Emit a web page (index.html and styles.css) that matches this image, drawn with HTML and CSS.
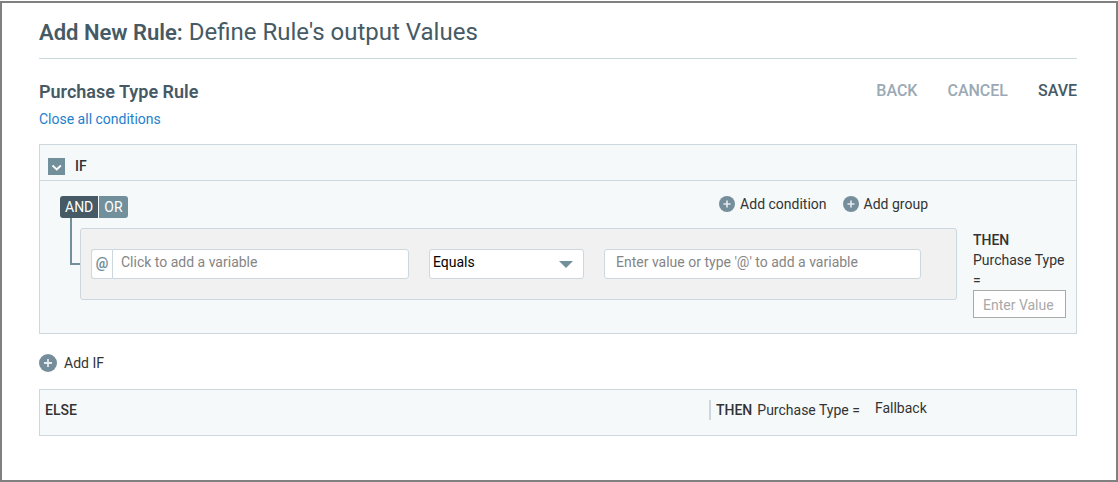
FILE: index.html
```html
<!DOCTYPE html>
<html lang="en">
<head>
<meta charset="utf-8">
<title>Add New Rule</title>
<link rel="stylesheet" href="styles.css">
</head>
<body>
<svg class="defs" aria-hidden="true">
  <symbol id="plus" viewBox="0 0 18 18">
    <circle cx="9" cy="9" r="9" fill="#768e9c"/>
    <path d="M9 5v8M5 9h8" stroke="#e4ecf0" stroke-width="1.8" fill="none"/>
  </symbol>
</svg>
<main class="page">
  <h1 class="page-title"><strong>Add New Rule:</strong> Define Rule's output Values</h1>
  <header class="rule-head">
    <div class="rule-info">
      <h2 class="rule-name">Purchase Type Rule</h2>
      <a class="link" href="#">Close all conditions</a>
    </div>
    <div class="actions">
      <button class="action" type="button">BACK</button>
      <button class="action" type="button">CANCEL</button>
      <button class="action action-main" type="button">SAVE</button>
    </div>
  </header>

  <section class="panel">
    <div class="panel-head">
      <button class="toggle" type="button" aria-label="Collapse condition">
        <svg viewBox="0 0 17 17" width="17" height="17"><path d="M4.5 7.5l4.2 4 4.2-4" fill="none" stroke="#fff" stroke-width="1.8"/></svg>
      </button>
      <span class="keyword">IF</span>
    </div>
    <div class="panel-body">
      <div class="conditions">
        <div class="toolbar">
          <div class="logic">
            <button class="logic-btn logic-on" type="button">AND</button>
            <button class="logic-btn" type="button">OR</button>
          </div>
          <div class="adders">
            <button class="add" type="button"><svg class="add-icon"><use href="#plus"/></svg>Add condition</button>
            <button class="add" type="button"><svg class="add-icon"><use href="#plus"/></svg>Add group</button>
          </div>
        </div>
        <div class="branch">
          <div class="connector"></div>
          <div class="group">
            <div class="variable">
              <label class="at" for="variable">@</label>
              <input class="field variable-field" id="variable" type="text" placeholder="Click to add a variable">
            </div>
            <div class="operator">
              <select class="field operator-field" aria-label="Operator"><option>Equals</option></select>
            </div>
            <div class="value">
              <input class="field value-field" type="text" aria-label="Value" placeholder="Enter value or type '@' to add a variable">
            </div>
          </div>
        </div>
      </div>
      <div class="result">
        <strong class="keyword">THEN</strong>
        <label for="result">Purchase Type =</label>
        <input class="result-field" id="result" type="text" placeholder="Enter Value">
      </div>
    </div>
  </section>

  <button class="add add-if" type="button"><svg class="add-icon add-icon-large"><use href="#plus"/></svg>Add IF</button>

  <section class="panel else">
    <strong class="keyword">ELSE</strong>
    <div class="else-result">
      <div class="else-label"><strong class="keyword">THEN</strong><label for="fallback">Purchase Type =</label></div>
      <input class="fallback" id="fallback" type="text" value="Fallback">
    </div>
  </section>
</main>
</body>
</html>
```
FILE: styles.css
```css
* { box-sizing: border-box; }

body {
  margin: 0;
  padding-top: 1px;
  background: #fff;
  color: #333;
  font: 14px/20px Roboto, "Liberation Sans", sans-serif;
}

button, input, select { font: inherit; color: inherit; }
button { padding: 0; border: 0; background: none; cursor: pointer; }

.defs { position: absolute; width: 0; height: 0; }

.page {
  min-height: calc(100vh - 1px);
  padding: 12px 39px 16px 37px;
  border: 2px solid #808080;
}

.page-title {
  margin: 0;
  padding-bottom: 8px;
  border-bottom: 1px solid #c9d8dd;
  color: #455a64;
  font-size: 24px;
  font-weight: 400;
  line-height: 34px;
}
.page-title strong { font-size: 22px; font-weight: 600; }

.rule-head {
  display: flex;
  justify-content: space-between;
  align-items: flex-start;
  padding: 21px 0 15px;
}
.rule-name {
  margin: 0 0 5px;
  color: #455a64;
  font-size: 18px;
  font-weight: 600;
  line-height: 24px;
}
.link { display: block; color: #1e80cc; text-decoration: none; }

.actions { display: flex; gap: 30px; }
.action {
  color: #9aa9b5;
  font-size: 16px;
  font-weight: 500;
  line-height: 22px;
}
.action-main { color: #455a64; }

.keyword { font-weight: 500; }

.panel { border: 1px solid #cdd8de; background: #f5f9fa; }

.panel-head {
  display: flex;
  align-items: center;
  gap: 10px;
  height: 36px;
  padding: 7px 8px 0;
  border-bottom: 1px solid #cdd8de;
}
.toggle { width: 17px; height: 17px; background: #728f9c; }
.toggle svg { display: block; }

.panel-body {
  display: flex;
  gap: 16px;
  padding: 10px 10px 15px 20px;
}
.conditions { flex: 1; min-width: 0; }
.toolbar {
  display: flex;
  justify-content: space-between;
  align-items: flex-start;
  padding: 5px 29px 0 0;
}
.logic { display: flex; gap: 1px; }
.logic-btn {
  padding: 0 5px;
  border-radius: 0 3px 3px 0;
  background: #728f9c;
  color: #fff;
  line-height: 22px;
}
.logic-on { border-radius: 3px 0 0 3px; background: #455a64; }

.adders { display: flex; gap: 16px; }
.add { display: flex; align-items: center; gap: 5px; line-height: 16px; }
.add-icon { width: 16px; height: 16px; }
.add-icon-large { width: 18px; height: 18px; }

.branch { display: flex; }
.connector {
  width: 10px;
  height: 47px;
  margin-left: 10px;
  border: solid #728f9c;
  border-width: 0 0 2px 2px;
}
.group {
  display: flex;
  flex: 1;
  gap: 20px;
  margin-top: 10px;
  padding: 20px 35px 20px 10px;
  border: 1px solid #cdd8de;
  border-radius: 3px;
  background: #f1f1f1;
}
.field {
  display: block;
  width: 100%;
  height: 30px;
  padding: 0 8px 4px;
  border: 1px solid #cdd8de;
  border-radius: 3px;
  background: #fff;
}
.field::placeholder { color: #858585; opacity: 1; }
.variable { display: flex; flex: 318; min-width: 0; }
.at {
  flex: none;
  width: 21px;
  border: 1px solid #cdd8de;
  border-right: 0;
  border-radius: 3px 0 0 3px;
  background: #fff;
  color: #728f9c;
  font-weight: 700;
  line-height: 26px;
  text-align: center;
}
.variable-field { border-radius: 0 3px 3px 0; }
.operator { position: relative; flex: 155; min-width: 0; }
.operator::after {
  content: "";
  position: absolute;
  top: 12px;
  right: 11px;
  border: solid transparent;
  border-width: 7px 7px 0;
  border-top-color: #728f9c;
  pointer-events: none;
}
.operator-field { padding: 0 3px 4px; color: #000; appearance: none; }
.value { flex: 317; min-width: 0; }
.value-field { padding: 0 11px 4px; }

.result {
  display: flex;
  flex-direction: column;
  width: 93px;
  padding-top: 39px;
}
.result-field {
  width: 100%;
  height: 28px;
  padding: 2px 9px 0;
  border: 1px solid #a9a9a9;
  background: #fff;
}
.result-field::placeholder { color: #a9a9a9; opacity: 1; }

.add-if { gap: 7px; margin: 20px 0 17px; }

.else {
  display: flex;
  align-items: flex-start;
  padding: 10px 5px 15px;
}
.else .keyword { flex: 1; }
.else-result { display: flex; width: 362px; gap: 15px; }
.else-label {
  display: flex;
  flex: none;
  gap: 5px;
  padding-left: 5px;
  border-left: 2px solid #cdd8de;
}
.fallback {
  flex: 1;
  min-width: 0;
  height: 16px;
  padding: 0;
  border: 0;
  background: none;
}
```
